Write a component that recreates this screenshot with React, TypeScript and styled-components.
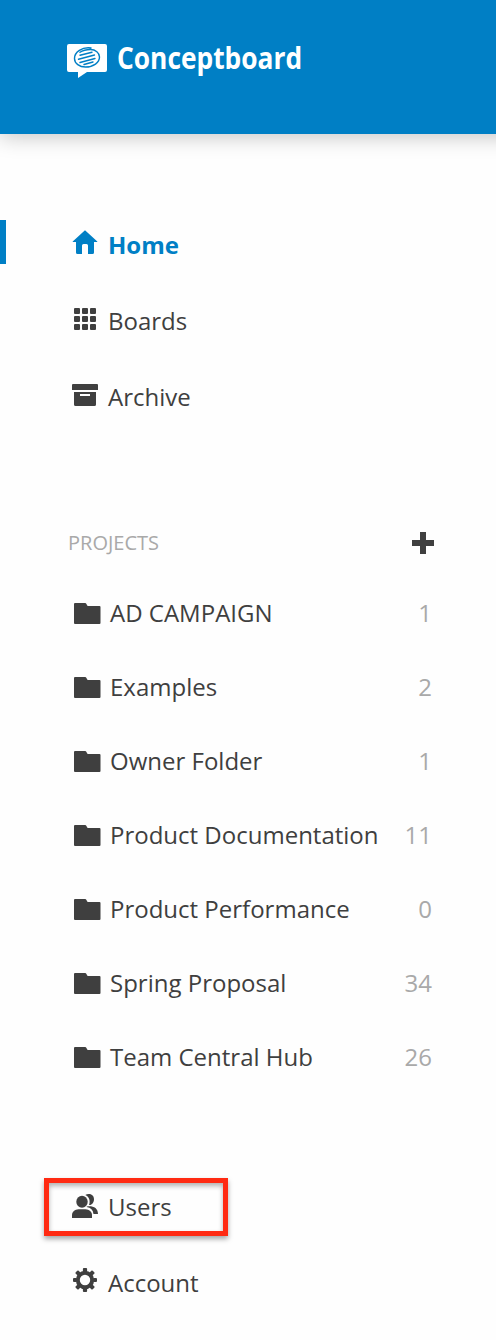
import React from "react";
import styled, { createGlobalStyle } from "styled-components";

const BLUE = "#007fc5";
const INK = "#3f3f3f";
const MUTED = "#a9a9a9";

const GlobalStyle = createGlobalStyle`
  * { box-sizing: border-box; }
  body {
    margin: 0;
    background: #fefefe;
    color: ${INK};
    font-family: "Open Sans", "Noto Sans", sans-serif;
  }
`;

const Page = styled.div`
  height: 1340px;
  overflow: hidden;
`;

const Header = styled.header`
  display: flex;
  align-items: flex-start;
  gap: 10px;
  height: 134px;
  margin-right: -40px;
  padding: 44px 0 0 67px;
  background: ${BLUE};
  color: #fff;
  box-shadow: 0 3px 20px rgba(0, 0, 0, 0.22);
`;

const Wordmark = styled.span`
  height: 34px;
  margin-top: -3px;
  font-size: 30px;
  font-weight: 700;
  line-height: 34px;
  white-space: nowrap;
  transform: scaleX(0.878);
  transform-origin: 0 50%;
`;

const Nav = styled.nav`
  display: flex;
  flex-direction: column;
  gap: 32px;
  padding-top: 86px;
`;

const NavItem = styled.a<{ $active?: boolean }>`
  display: grid;
  grid-template-columns: 36px auto;
  align-items: start;
  height: 44px;
  padding-left: ${(p) => (p.$active ? 66 : 72)}px;
  border-left: ${(p) => (p.$active ? `6px solid ${BLUE}` : "0")};
  color: ${(p) => (p.$active ? BLUE : INK)};
  font-size: 24px;
  font-weight: ${(p) => (p.$active ? 700 : 400)};
  line-height: 50px;
  svg { display: block; margin-top: 10px; }
`;

const NavLabel = styled.span`
  white-space: nowrap;
`;

const SectionHead = styled.div`
  display: flex;
  align-items: center;
  justify-content: space-between;
  height: 44px;
  margin-top: 105px;
  padding: 0 62px 0 68px;
`;

const SectionTitle = styled.h2`
  margin: 0;
  color: ${MUTED};
  font-size: 20px;
  font-weight: 400;
  line-height: 44px;
`;

const ProjectList = styled.ul`
  display: flex;
  flex-direction: column;
  gap: 30px;
  margin: 0;
  padding: 26px 64px 0 74px;
  list-style: none;
`;

const ProjectRow = styled.li`
  display: grid;
  grid-template-columns: 36px 1fr auto;
  height: 44px;
  font-size: 24px;
  line-height: 44px;
  white-space: nowrap;
  svg { display: block; margin-top: 11px; }
`;

const Count = styled.span`
  color: ${MUTED};
`;

const Footer = styled.nav`
  display: flex;
  flex-direction: column;
  padding-top: 99px;
`;

const Highlight = styled.div`
  width: 184px;
  height: 58px;
  margin: 0 0 22px 44px;
  border: 5px solid #ff2a12;
  box-shadow: 0 3px 5px rgba(0, 0, 0, 0.35), inset 0 3px 5px rgba(0, 0, 0, 0.3);
  ${NavItem} { padding-left: 23px; margin-top: -1px; }
`;

const Logo = () => (
  <svg width="40" height="35" viewBox="0 0 40 35">
    <path d="M2 0h36a2 2 0 0 1 2 2v24a2 2 0 0 1-2 2H20l-9 6V28H2a2 2 0 0 1-2-2V2a2 2 0 0 1 2-2z" fill="#fff" />
    <g fill="none" stroke={BLUE} strokeWidth="1.4" strokeLinecap="round">
      <path d="M24 4C15 2.800 7.500 8 7.500 14.500c0 5 5 8.500 11 8.500 8 0 14-4.500 14-10 0-4-4-7.500-9-7.500-4 0-8 1-10.500 2.800" />
      <path d="M13 11.200l12-3M11.500 15.300l16-4.300M13 18.500l15-4M17 20.500l9-2.500" />
    </g>
  </svg>
);

const HomeIcon = () => (
  <svg width="26" height="26" viewBox="0 0 26 26" fill="currentColor">
    <path d="M13 .3 25.300 11.500v.5H22v10.500a1.500 1.500 0 0 1-1.500 1.500H16v-8.500a1.500 1.500 0 0 0-1.500-1.500h-3a1.500 1.500 0 0 0-1.500 1.500V24H5.500A1.500 1.500 0 0 1 4 22.500V12H.7v-.5z" />
  </svg>
);

const GridIcon = () => (
  <svg width="26" height="26" viewBox="0 0 26 26" fill="currentColor">
    {[2, 10, 18].map((x) =>
      [2, 10, 18].map((y) => <rect key={`${x}-${y}`} x={x} y={y} width="6" height="6" rx="1" />)
    )}
  </svg>
);

const ArchiveIcon = () => (
  <svg width="26" height="26" viewBox="0 0 26 26" fill="currentColor">
    <path d="M1 2h24a1 1 0 0 1 1 1v5H0V3a1 1 0 0 1 1-1z" />
    <path fillRule="evenodd" d="M2 10h22v12.500a1.500 1.500 0 0 1-1.500 1.500h-19A1.500 1.500 0 0 1 2 22.500zm6 2v2h10v-2z" />
  </svg>
);

const PlusIcon = () => (
  <svg width="22" height="22" viewBox="0 0 22 22" fill="currentColor">
    <path d="M8 0h6v8h8v6h-8v8H8v-8H0V8h8z" />
  </svg>
);

const FolderIcon = () => (
  <svg width="27" height="22" viewBox="0 0 27 22" fill="currentColor">
    <path d="M1 1h10.200a1 1 0 0 1 .9.500L13.600 4h11.900a1 1 0 0 1 1 1v16a1 1 0 0 1-1 1H1a1 1 0 0 1-1-1V2a1 1 0 0 1 1-1z" />
  </svg>
);

const UsersIcon = () => (
  <svg width="26" height="26" viewBox="0 0 26 26" fill="currentColor">
    <ellipse cx="10" cy="9.700" rx="5.700" ry="6" />
    <path d="M0 26v-3C0 19.500 3 17.700 6.500 17.300h7c3.500.4 6.500 2.200 6.500 5.700v3z" />
    <path d="M13.300 3c3-2 8.700-1.200 8.700 4.200 0 3.500-2.200 5.900-5 5.800C18.500 9.500 17.500 4.500 13.300 3z" />
    <path d="M14.700 14.400c6-.9 11.300 1.200 11.300 7.600h-4.500c-.4-4-2.800-6.300-6.800-7z" />
  </svg>
);

const TEETH = [0, 45, 90, 135, 180, 225, 270, 315];

const GearIcon = () => (
  <svg width="26" height="26" viewBox="0 0 26 26">
    <circle cx="13" cy="12" r="7.200" fill="none" stroke="currentColor" strokeWidth="4" />
    {TEETH.map((angle) => (
      <rect key={angle} x="10.900" y="0" width="4.200" height="4" rx="1" fill="currentColor" transform={`rotate(${angle} 13 12)`} />
    ))}
  </svg>
);

const projects = [
  { name: "AD CAMPAIGN", count: 1 },
  { name: "Examples", count: 2 },
  { name: "Owner Folder", count: 1 },
  { name: "Product Documentation", count: 11 },
  { name: "Product Performance", count: 0 },
  { name: "Spring Proposal", count: 34 },
  { name: "Team Central Hub", count: 26 },
];

export default function App() {
  return (
    <Page>
      <GlobalStyle />
      <Header>
        <Logo />
        <Wordmark>Conceptboard</Wordmark>
      </Header>
      <Nav>
        <NavItem $active>
          <HomeIcon />
          <NavLabel>Home</NavLabel>
        </NavItem>
        <NavItem>
          <GridIcon />
          <NavLabel>Boards</NavLabel>
        </NavItem>
        <NavItem>
          <ArchiveIcon />
          <NavLabel>Archive</NavLabel>
        </NavItem>
      </Nav>
      <SectionHead>
        <SectionTitle>PROJECTS</SectionTitle>
        <PlusIcon />
      </SectionHead>
      <ProjectList>
        {projects.map((p) => (
          <ProjectRow key={p.name}>
            <FolderIcon />
            <span>{p.name}</span>
            <Count>{p.count}</Count>
          </ProjectRow>
        ))}
      </ProjectList>
      <Footer>
        <Highlight>
          <NavItem>
            <UsersIcon />
            <NavLabel>Users</NavLabel>
          </NavItem>
        </Highlight>
        <NavItem>
          <GearIcon />
          <NavLabel>Account</NavLabel>
        </NavItem>
      </Footer>
    </Page>
  );
}
